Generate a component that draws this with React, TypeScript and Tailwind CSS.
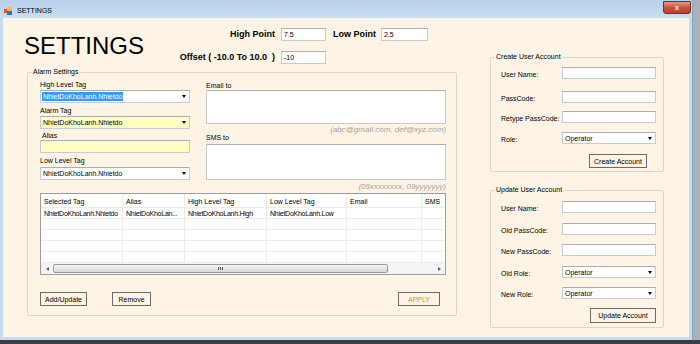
import React from 'react';

const CREAM = 'bg-[#fdf4e5]';

function Label({ children, className = '' }: { children: React.ReactNode; className?: string }) {
  return <div className={`h-[8px] text-[7px] leading-[8px] text-black whitespace-nowrap ${className}`}>{children}</div>;
}

function TextBox({ value = '', className = '' }: { value?: string; className?: string }) {
  return (
    <div className={`flex items-center border border-[#c7cbd2] border-t-[#a9aeb6] pl-[2px] text-[7px] leading-none text-black ${className}`}>
      {value}
    </div>
  );
}

function Arrow() {
  return <div className="h-0 w-0 border-x-[2.5px] border-t-[3px] border-x-transparent border-t-black" />;
}

function Combo({ value, className = '', selected = false }: { value: string; className?: string; selected?: boolean }) {
  return (
    <div className={`flex items-center justify-between border border-[#c7cbd2] border-t-[#a9aeb6] pl-[1px] pr-[3px] text-[7px] leading-none ${className}`}>
      <span className={selected ? 'bg-[#3399ff] px-[1px] py-[1px] text-white' : 'px-[1px] text-black'}>{value}</span>
      <Arrow />
    </div>
  );
}

function Button({ children, className = '' }: { children: React.ReactNode; className?: string }) {
  return (
    <div className={`flex items-center justify-center border border-[#6a6a6a] ${CREAM} text-[7px] leading-none whitespace-nowrap ${className}`}>
      {children}
    </div>
  );
}

function GroupBox({ title, className = '', children }: { title: string; className?: string; children: React.ReactNode }) {
  return (
    <div className={`relative rounded-[2px] border border-[#dcd7cc] ${className}`}>
      <div className={`absolute -top-[5px] left-[4px] ${CREAM} px-[1px] text-[7px] leading-[8px] text-black whitespace-nowrap`}>{title}</div>
      {children}
    </div>
  );
}

function FormRow({ label, children, className = '' }: { label: string; children: React.ReactNode; className?: string }) {
  return (
    <div className={`flex h-[12px] items-center ${className}`}>
      <div className="w-[61px] pt-[2px] text-[7px] leading-none whitespace-nowrap">{label}</div>
      {children}
    </div>
  );
}

const cols = [
  { name: 'Selected Tag', w: 'w-[82px]' },
  { name: 'Alias', w: 'w-[62px]' },
  { name: 'High Level Tag', w: 'w-[82px]' },
  { name: 'Low Level Tag', w: 'w-[80px]' },
  { name: 'Email', w: 'w-[75px]' },
  { name: 'SMS', w: 'w-[40px]' },
];

// alias column is already clipped in the source grid
const row = ['NhietDoKhoLanh.Nhietdo', 'NhietDoKhoLan...', 'NhietDoKhoLanh.High', 'NhietDoKhoLanh.Low', '', ''];

function Grid() {
  return (
    <div className="mt-[2px] flex h-[82px] w-[406px] flex-col overflow-hidden border border-[#9c9c9c] bg-white">
      <div className="flex h-[14px] shrink-0 border-b border-[#ececec]">
        {cols.map((c) => (
          <div key={c.name} className={`${c.w} shrink-0 border-r border-[#ececec] pl-[3px] pt-[4px] text-[7px] leading-none text-black whitespace-nowrap`}>
            {c.name}
          </div>
        ))}
      </div>
      {[0, 1, 2, 3, 4].map((i) => (
        <div key={i} className="flex h-[11px] shrink-0 border-b border-[#ececec]">
          {cols.map((c, j) => (
            <div key={c.name} className={`${c.w} shrink-0 border-r border-[#ececec] pl-[3px] pt-[2px] text-[7px] leading-none tracking-[-0.25px] text-black whitespace-nowrap`}>
              {i === 0 ? row[j] : ''}
            </div>
          ))}
        </div>
      ))}
      <div className="flex h-[11px] shrink-0 items-center bg-[#f4f4f4]">
        <div className="flex w-[12px] justify-center">
          <div className="h-0 w-0 border-y-[2px] border-r-[3px] border-y-transparent border-r-[#606060]" />
        </div>
        <div className="flex h-[9px] w-[335px] items-center justify-center rounded-[2px] border border-[#9a9a9a] bg-gradient-to-b from-[#f6f6f6] to-[#d8d8d8]">
          <div className="flex gap-[1px]">
            <div className="h-[3px] w-[1px] bg-[#555]" />
            <div className="h-[3px] w-[1px] bg-[#555]" />
            <div className="h-[3px] w-[1px] bg-[#555]" />
          </div>
        </div>
        <div className="ml-auto mr-[4px] h-0 w-0 border-y-[2px] border-l-[3px] border-y-transparent border-l-[#606060]" />
      </div>
    </div>
  );
}

function TitleBar() {
  return (
    <div className="flex h-[18px] shrink-0 items-start bg-gradient-to-b from-[#b9d1ec] to-[#c9ddf3]">
      <svg width="8" height="8" viewBox="0 0 8 8" className="ml-[4px] mt-[7px]">
        <rect x="0" y="2" width="4" height="4" fill="#e05030" />
        <rect x="3" y="0" width="5" height="4" fill="#f0c030" />
        <rect x="3" y="4" width="5" height="4" fill="#3070d0" />
      </svg>
      <div className="ml-[5px] mt-[7px] text-[7px] leading-none text-black">SETTINGS</div>
      <div className="ml-auto mr-[1px] mt-[1px] flex h-[13px] w-[28px] items-center justify-center rounded-b-[3px] border border-[#7a2b22] bg-gradient-to-b from-[#e29a88] via-[#c9503d] to-[#b8412f] text-[8px] font-bold leading-none text-white">
        x
      </div>
    </div>
  );
}

export default function App() {
  return (
    <div className="h-[344px] w-[700px] overflow-hidden bg-[#3a3e45] font-['Liberation_Sans',Arial,sans-serif]">
      <div className="flex h-[340px]">
        <div className="flex h-[340px] w-[693px] flex-col border-r border-[#8aa3bf] bg-[#c6dbf2]">
          <TitleBar />
          <div className={`ml-[3px] mr-[3px] mb-[3px] flex flex-1 ${CREAM}`}>
            {/* left side */}
            <div className="flex w-[454px] flex-col">
              <div className="flex h-[54px] shrink-0">
                <div className="ml-[21px] mt-[16px] w-[145px] text-[24px] leading-none text-black">SETTINGS</div>
                <div className="mt-[10px] flex flex-col gap-[10px]">
                  <div className="flex h-[13px] items-center">
                    <div className="w-[106px] text-right text-[9px] font-bold leading-none">High Point</div>
                    <TextBox value="7.5" className="ml-[6px] h-[13px] w-[45px] bg-white" />
                    <div className="ml-[7px] text-[9px] font-bold leading-none whitespace-nowrap">Low Point</div>
                    <TextBox value="2.5" className="ml-[5px] h-[13px] w-[47px] bg-white" />
                  </div>
                  <div className="flex h-[13px] items-center">
                    <div className="flex w-[106px] justify-end text-[9px] font-bold leading-none whitespace-pre">Offset ( -10.0 To 10.0  )</div>
                    <TextBox value="-10" className="ml-[6px] h-[13px] w-[45px] bg-white" />
                  </div>
                </div>
              </div>

              <GroupBox title="Alarm Settings" className="ml-[24px] h-[244px] w-[430px] shrink-0 pl-[12px] pt-[8px]">
                <div className="flex">
                  <div className="flex w-[150px] flex-col">
                    <Label>High Level Tag</Label>
                    <Combo value="NhietDoKhoLanh.Nhietdo" selected className="mt-[1px] h-[13px] bg-white" />
                    <Label className="mt-[4px]">Alarm Tag</Label>
                    <Combo value="NhietDoKhoLanh.Nhietdo" className="mt-[1px] h-[13px] bg-[#ffffc2]" />
                    <Label className="mt-[3px] pl-[2px]">Alias</Label>
                    <TextBox className="h-[13px] bg-[#ffffc2]" />
                    <Label className="mt-[4px]">Low Level Tag</Label>
                    <Combo value="NhietDoKhoLanh.Nhietdo" className="mt-[2px] h-[13px] bg-white" />
                  </div>
                  <div className="ml-[16px] flex w-[240px] flex-col pt-[1px]">
                    <Label>Email to</Label>
                    <TextBox className="h-[34px] bg-white" />
                    <div className="mt-[1px] h-[9px] text-right text-[8px] italic leading-[9px] text-[#a3a3a3]">(abc@gmail.com, def@xyz.com)</div>
                    <Label>SMS to</Label>
                    <TextBox className="mt-[2px] h-[36px] bg-white" />
                    <div className="mt-[2px] h-[9px] text-right text-[8px] italic leading-[9px] text-[#a3a3a3]">(09xxxxxxxx, 09yyyyyyy)</div>
                  </div>
                </div>
                <Grid />
                <div className="mt-[17px] flex h-[14px] w-[406px]">
                  <Button className="w-[47px]">Add/Update</Button>
                  <Button className="ml-[25px] w-[39px]">Remove</Button>
                  <Button className="ml-auto mr-[6px] w-[42px] text-[#c8913e]">APPLY</Button>
                </div>
              </GroupBox>
            </div>

            {/* right side */}
            <div className="ml-[33px] flex w-[174px] flex-col">
              <GroupBox title="Create User Account" className="mt-[39px] h-[115px] shrink-0 pl-[10px] pt-[9px]">
                <FormRow label="User Name:">
                  <TextBox className="h-[12px] w-[94px] bg-white" />
                </FormRow>
                <FormRow label="PassCode:" className="mt-[12px]">
                  <TextBox className="h-[12px] w-[94px] bg-white" />
                </FormRow>
                <FormRow label="Retype PassCode:" className="mt-[8px]">
                  <TextBox className="h-[12px] w-[94px] bg-white" />
                </FormRow>
                <FormRow label="Role:" className="mt-[9px]">
                  <Combo value="Operator" className="h-[12px] w-[94px] bg-white" />
                </FormRow>
                <Button className="ml-[88px] mt-[10px] h-[14px] w-[58px]">Create Account</Button>
              </GroupBox>

              <GroupBox title="Update User Account" className="mt-[18px] h-[138px] shrink-0 pl-[10px] pt-[10px]">
                <FormRow label="User Name:">
                  <TextBox className="h-[12px] w-[94px] bg-white" />
                </FormRow>
                <FormRow label="Old PassCode:" className="mt-[10px]">
                  <TextBox className="h-[12px] w-[94px] bg-white" />
                </FormRow>
                <FormRow label="New PassCode:" className="mt-[9px]">
                  <TextBox className="h-[12px] w-[94px] bg-white" />
                </FormRow>
                <FormRow label="Old Role:" className="mt-[10px]">
                  <Combo value="Operator" className="h-[12px] w-[94px] bg-white" />
                </FormRow>
                <FormRow label="New Role:" className="mt-[9px]">
                  <Combo value="Operator" className="h-[12px] w-[94px] bg-white" />
                </FormRow>
                <Button className="ml-[89px] mt-[9px] h-[15px] w-[66px]">Update Account</Button>
              </GroupBox>
            </div>
          </div>
        </div>
        <div className="h-[340px] flex-1 bg-[#a9b2bc]" />
      </div>
    </div>
  );
}
